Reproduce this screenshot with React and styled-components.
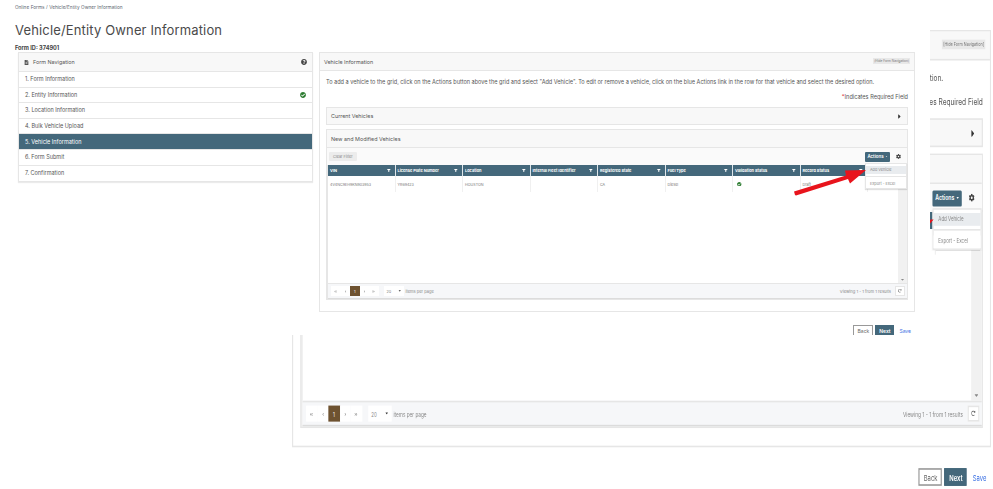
import React from "react";
import styled, { createGlobalStyle } from "styled-components";
import {
  FaCaretDown,
  FaCaretRight,
  FaCheckCircle,
  FaCog,
  FaFileAlt,
  FaFilter,
  FaQuestionCircle,
  FaRedoAlt,
  FaAngleLeft,
  FaAngleRight,
  FaAngleDoubleLeft,
  FaAngleDoubleRight,
} from "react-icons/fa";

const teal = "#44687b";
const line = "#e6e6e6";
const soft = "#f8f8f8";

const GlobalStyle = createGlobalStyle`
  html, body {
    margin: 0;
    padding: 0;
    background: #fff;
    font-family: "Inter", "Liberation Sans", sans-serif;
    color: #555;
  }
`;

const Stage = styled.div`
  position: relative;
  width: 993px;
  height: 489px;
  overflow: hidden;
  background: #fff;
`;

/* the pasted, stretched copy of the same form that sits behind the page */
const BackShot = styled.div`
  position: absolute;
  left: 292px;
  top: 30px;
  transform: scale(1.173, 1.605);
  transform-origin: top left;
`;

const FrontShot = styled.div`
  position: absolute;
  left: 0;
  top: 0;
  width: 930px;
  height: 335px;
  overflow: hidden;
  background: #fff;
`;

const Breadcrumb = styled.div`
  padding: 5px 0 0 15px;
  font-size: 4.7px;
  line-height: 5px;
  color: #5b6670;
  word-spacing: 0.2px;
`;

const Title = styled.h1`
  margin: 12px 0 0 15px;
  font-size: 13px;
  line-height: 17px;
  font-weight: 400;
  letter-spacing: 0.15px;
  color: #4a4a4a;
`;

const FormId = styled.div`
  margin: 5px 0 0 15px;
  font-size: 5.6px;
  line-height: 8px;
  font-weight: 700;
  color: #444;
`;

const Columns = styled.div`
  display: flex;
  gap: 6px;
  padding-left: 18px;
  align-items: flex-start;
`;

const NavCard = styled.div`
  width: 295px;
  border: 1px solid ${line};
  box-sizing: border-box;
  box-shadow: 0 1px 1px rgba(0, 0, 0, 0.08);
`;

const NavHead = styled.div`
  display: flex;
  align-items: center;
  gap: 4px;
  height: 18px;
  padding: 0 5px;
  font-size: 5.4px;
  background: ${soft};
  border-bottom: 1px solid ${line};
  color: #555;
  svg {
    font-size: 5px;
  }
`;

const HelpIcon = styled(FaQuestionCircle)`
  margin-left: auto;
  color: #444;
  && {
    font-size: 6px;
  }
`;

const NavItem = styled.div`
  display: flex;
  align-items: center;
  justify-content: space-between;
  height: 15.6px;
  padding: 0 6px;
  box-sizing: border-box;
  font-size: 5.5px;
  border-bottom: 1px solid ${line};
  background: ${(p) => (p.$active ? teal : "#fff")};
  color: ${(p) => (p.$active ? "#fff" : "#555")};
  &:last-child {
    border-bottom: 0;
  }
`;

const DoneIcon = styled(FaCheckCircle)`
  font-size: 6px;
  color: #2e7d32;
`;

const MainColumn = styled.div`
  position: relative;
  width: 596px;
`;

const MainCard = styled.div`
  height: 260px;
  box-sizing: border-box;
  border: 1px solid ${line};
`;

const MainHead = styled.div`
  display: flex;
  align-items: center;
  justify-content: space-between;
  height: 17px;
  padding: 0 4px;
  font-size: 5.4px;
  background: ${soft};
  border-bottom: 1px solid ${line};
`;

const HideButton = styled.span`
  margin-bottom: 2px;
  font-size: 3.2px;
  padding: 1px 1px;
  background: #e8e8e8;
  color: #777;
`;

const MainBody = styled.div`
  padding: 7px 6px 0;
`;

const Intro = styled.div`
  font-size: 5.56px;
  line-height: 8px;
  white-space: nowrap;
`;

const Required = styled.div`
  margin-top: 7px;
  text-align: right;
  font-size: 5.6px;
  line-height: 8px;
  em {
    font-style: normal;
    color: #d33;
  }
`;

const Accordion = styled.div`
  display: flex;
  align-items: center;
  justify-content: space-between;
  height: 18px;
  margin-top: 6px;
  padding: 0 4px;
  box-sizing: border-box;
  border: 1px solid ${line};
  background: ${soft};
  font-size: 5.4px;
  svg {
    font-size: 7px;
    color: #333;
  }
`;

const VehiclesCard = styled.div`
  margin-top: 4px;
  height: 171px;
  box-sizing: border-box;
  border: 1px solid ${line};
  display: flex;
  flex-direction: column;
`;

const VehiclesHead = styled.div`
  display: flex;
  align-items: center;
  height: 18px;
  flex: none;
  padding: 0 4px;
  box-sizing: border-box;
  background: ${soft};
  border-bottom: 1px solid ${line};
  font-size: 5.4px;
`;

const Toolbar = styled.div`
  position: relative;
  display: flex;
  align-items: center;
  justify-content: space-between;
  height: 17px;
  flex: none;
  padding: 0 6px 0 2px;
  box-sizing: border-box;
  background: #fafafa;
`;

const ClearFilter = styled.span`
  display: flex;
  align-items: center;
  height: 9px;
  padding: 0 4px;
  border-radius: 1px;
  background: #ececec;
  color: #888;
  font-size: 3.8px;
`;

const ToolActions = styled.div`
  display: flex;
  align-items: center;
  gap: 6px;
  svg {
    font-size: 5px;
    color: #444;
  }
`;

const ActionsButton = styled.span`
  position: relative;
  display: flex;
  align-items: center;
  gap: 1px;
  height: 10px;
  width: 25px;
  justify-content: center;
  background: ${teal};
  border-radius: 1px;
  color: #fff;
  font-size: 4.4px;
  font-weight: 600;
  && svg {
    font-size: 3px;
    color: #fff;
  }
`;

const Dropdown = styled.div`
  position: absolute;
  z-index: 2;
  top: 11px;
  left: 0;
  width: 42px;
  height: 26px;
  padding-top: 2px;
  box-sizing: border-box;
  background: #fff;
  border: 1px solid ${line};
  box-shadow: 0 1px 1px rgba(0, 0, 0, 0.12);
  color: #888;
  font-size: 3.8px;
  font-weight: 400;
`;

const DropItem = styled.div`
  display: flex;
  align-items: center;
  height: 8px;
  padding: 0 4px;
  background: ${(p) => (p.$hover ? "#e9ecef" : "#fff")};
`;

const DropDivider = styled.div`
  height: 1px;
  margin: 2px 0 3px;
  background: ${line};
`;

const Grid = styled.div`
  flex: 1;
  display: flex;
  flex-direction: column;
  border-left: 1px solid ${line};
`;

const HeadRow = styled.div`
  display: grid;
  grid-template-columns: repeat(8, 67.5px) 1fr;
  height: 11px;
  flex: none;
  background: ${teal};
`;

const HeadCell = styled.div`
  display: flex;
  align-items: center;
  justify-content: space-between;
  padding: 0 4px 0 2px;
  border-right: 1px solid #dfe6ea;
  color: #fff;
  font-size: 3.9px;
  font-weight: 700;
  white-space: nowrap;
  svg {
    font-size: 3.6px;
  }
`;

const GridBody = styled.div`
  position: relative;
  flex: 1;
  padding-right: 8px;
`;

const Scrollbar = styled.div`
  position: absolute;
  top: 0;
  right: 0;
  bottom: 0;
  width: 9px;
  background: #f1f1f1;
`;

const ScrollArrow = styled(FaCaretDown)`
  position: absolute;
  right: 2px;
  bottom: 1px;
  font-size: 5px;
  color: #888;
`;

const BodyRow = styled.div`
  display: grid;
  grid-template-columns: repeat(8, 67.5px);
  height: 16px;
`;

const BodyCell = styled.div`
  display: flex;
  align-items: center;
  padding: 0 2px;
  border-right: 1px solid #f0f0f0;
  color: #777;
  font-size: 3.7px;
  white-space: nowrap;
  svg {
    font-size: 4.5px;
    margin-left: 2px;
    color: #2e7d32;
  }
`;

const Pager = styled.div`
  display: flex;
  align-items: center;
  height: 16px;
  flex: none;
  padding: 0 2px 0 3px;
  box-sizing: border-box;
  background: #f6f7f9;
  border-top: 1px solid ${line};
  border-bottom: 1px solid #dcdcdc;
`;

const PageButton = styled.span`
  display: flex;
  align-items: center;
  justify-content: center;
  width: 9.5px;
  height: 10px;
  background: ${(p) => (p.$current ? "#6e5230" : "#fff")};
  color: ${(p) => (p.$current ? "#fff" : "#999")};
  font-size: 3.8px;
  svg {
    font-size: 3px;
  }
`;

const PageSelect = styled.span`
  display: flex;
  align-items: center;
  justify-content: space-between;
  width: 20px;
  height: 10px;
  margin-left: 5px;
  padding: 0 2px 0 3px;
  box-sizing: border-box;
  background: #fff;
  color: #888;
  font-size: 3.8px;
  svg {
    font-size: 3.5px;
    color: #333;
  }
`;

const PagerText = styled.span`
  margin-left: 2px;
  color: #888;
  font-size: 4px;
  white-space: nowrap;
`;

const Viewing = styled(PagerText)`
  margin-left: auto;
  margin-right: 4px;
  font-size: 4.1px;
`;

const Refresh = styled.span`
  display: flex;
  align-items: center;
  justify-content: center;
  width: 10px;
  height: 10px;
  background: #fff;
  border: 1px solid ${line};
  box-sizing: border-box;
  color: #666;
  svg {
    font-size: 3.6px;
  }
`;

const Footer = styled.div`
  display: flex;
  align-items: center;
  justify-content: flex-end;
  gap: 2px;
  padding: 13px 4px 0 0;
`;

const BackButton = styled.span`
  display: flex;
  align-items: center;
  justify-content: center;
  width: 20px;
  height: 11px;
  box-sizing: border-box;
  border: 1px solid #999;
  background: #fff;
  color: #666;
  font-size: 5px;
`;

const NextButton = styled(BackButton)`
  width: 19px;
  border-color: ${teal};
  background: ${teal};
  color: #fff;
  font-weight: 600;
`;

const SaveLink = styled.span`
  margin-left: 3px;
  color: #3d72e4;
  font-size: 5px;
`;

const ArrowMark = styled.svg`
  position: absolute;
  z-index: 3;
  left: 474px;
  top: 113px;
  width: 76px;
  height: 32px;
`;

const navItems = [
  "1. Form Information",
  "2. Entity Information",
  "3. Location Information",
  "4. Bulk Vehicle Upload",
  "5. Vehicle Information",
  "6. Form Submit",
  "7. Confirmation",
];

const columns = [
  "VIN",
  "License Plate Number",
  "Location",
  "Internal Fleet Identifier",
  "Registered State",
  "Fuel Type",
  "Validation Status",
  "Record Status",
];

const cells = ["4V4NC9EH9KN903953", "YR69423", "HOUSTON", "", "CA", "Diesel"];

const VehicleForm = () => (
  <MainColumn>
    <MainCard>
      <MainHead>
        <span>Vehicle Information</span>
        <HideButton>[Hide Form Navigation]</HideButton>
      </MainHead>
      <MainBody>
        <Intro>
          To add a vehicle to the grid, click on the Actions button above the grid and select "Add Vehicle". To edit or remove a vehicle, click on the blue Actions link in the row for that vehicle and select the desired option.
        </Intro>
        <Required>
          <em>*</em>Indicates Required Field
        </Required>
        <Accordion>
          <span>Current Vehicles</span>
          <FaCaretRight />
        </Accordion>
        <VehiclesCard>
          <VehiclesHead>New and Modified Vehicles</VehiclesHead>
          <Toolbar>
            <ClearFilter>Clear Filter</ClearFilter>
            <ToolActions>
              <ActionsButton>
                Actions
                <FaCaretDown />
                <Dropdown>
                  <DropItem $hover>Add Vehicle</DropItem>
                  <DropDivider />
                  <DropItem>Export - Excel</DropItem>
                </Dropdown>
              </ActionsButton>
              <FaCog />
            </ToolActions>
          </Toolbar>
          <Grid>
            <HeadRow>
              {columns.map((name) => (
                <HeadCell key={name}>
                  {name}
                  <FaFilter />
                </HeadCell>
              ))}
              <HeadCell />
            </HeadRow>
            <GridBody>
              <Scrollbar>
                <ScrollArrow />
              </Scrollbar>
              <BodyRow>
                {cells.map((text, i) => (
                  <BodyCell key={i}>{text}</BodyCell>
                ))}
                <BodyCell>
                  <FaCheckCircle />
                </BodyCell>
                <BodyCell>Draft</BodyCell>
              </BodyRow>
            </GridBody>
            <Pager>
              <PageButton>
                <FaAngleDoubleLeft />
              </PageButton>
              <PageButton>
                <FaAngleLeft />
              </PageButton>
              <PageButton $current>1</PageButton>
              <PageButton>
                <FaAngleRight />
              </PageButton>
              <PageButton>
                <FaAngleDoubleRight />
              </PageButton>
              <PageSelect>
                20
                <FaCaretDown />
              </PageSelect>
              <PagerText>items per page</PagerText>
              <Viewing>Viewing 1 - 1 from 1 results</Viewing>
              <Refresh>
                <FaRedoAlt />
              </Refresh>
            </Pager>
          </Grid>
        </VehiclesCard>
      </MainBody>
    </MainCard>
    <Footer>
      <BackButton>Back</BackButton>
      <NextButton>Next</NextButton>
      <SaveLink>Save</SaveLink>
    </Footer>
    <ArrowMark viewBox="0 0 76 32">
      <polygon
        points="2,30 1,26.5 53,10.5 52,5.5 73,5 57,18.5 55,14 3,30.5"
        fill="#e8141c"
      />
    </ArrowMark>
  </MainColumn>
);

const App = () => (
  <Stage>
    <GlobalStyle />
    <BackShot>
      <VehicleForm />
    </BackShot>
    <FrontShot>
      <Breadcrumb>Online Forms / Vehicle/Entity Owner Information</Breadcrumb>
      <Title>Vehicle/Entity Owner Information</Title>
      <FormId>Form ID: 374901</FormId>
      <Columns>
        <NavCard>
          <NavHead>
            <FaFileAlt />
            Form Navigation
            <HelpIcon />
          </NavHead>
          {navItems.map((label, i) => (
            <NavItem key={label} $active={i === 4}>
              {label}
              {i === 1 && <DoneIcon />}
            </NavItem>
          ))}
        </NavCard>
        <VehicleForm />
      </Columns>
    </FrontShot>
  </Stage>
);

export default App;
